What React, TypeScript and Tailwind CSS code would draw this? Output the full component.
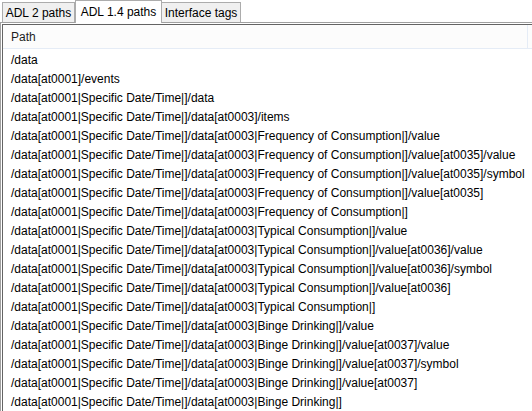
import React from "react";

const rows = [
  "/data",
  "/data[at0001]/events",
  "/data[at0001|Specific Date/Time|]/data",
  "/data[at0001|Specific Date/Time|]/data[at0003]/items",
  "/data[at0001|Specific Date/Time|]/data[at0003|Frequency of Consumption|]/value",
  "/data[at0001|Specific Date/Time|]/data[at0003|Frequency of Consumption|]/value[at0035]/value",
  "/data[at0001|Specific Date/Time|]/data[at0003|Frequency of Consumption|]/value[at0035]/symbol",
  "/data[at0001|Specific Date/Time|]/data[at0003|Frequency of Consumption|]/value[at0035]",
  "/data[at0001|Specific Date/Time|]/data[at0003|Frequency of Consumption|]",
  "/data[at0001|Specific Date/Time|]/data[at0003|Typical Consumption|]/value",
  "/data[at0001|Specific Date/Time|]/data[at0003|Typical Consumption|]/value[at0036]/value",
  "/data[at0001|Specific Date/Time|]/data[at0003|Typical Consumption|]/value[at0036]/symbol",
  "/data[at0001|Specific Date/Time|]/data[at0003|Typical Consumption|]/value[at0036]",
  "/data[at0001|Specific Date/Time|]/data[at0003|Typical Consumption|]",
  "/data[at0001|Specific Date/Time|]/data[at0003|Binge Drinking|]/value",
  "/data[at0001|Specific Date/Time|]/data[at0003|Binge Drinking|]/value[at0037]/value",
  "/data[at0001|Specific Date/Time|]/data[at0003|Binge Drinking|]/value[at0037]/symbol",
  "/data[at0001|Specific Date/Time|]/data[at0003|Binge Drinking|]/value[at0037]",
  "/data[at0001|Specific Date/Time|]/data[at0003|Binge Drinking|]",
];

export default function App() {
  return (
    <div
      className="w-[532px] h-[411px] overflow-hidden bg-white text-[12px] text-black flex flex-col"
      style={{ fontFamily: '"Liberation Sans", Arial, sans-serif' }}
    >
      {/* tab strip */}
      <div className="h-[22px] flex items-end pl-[2px] shrink-0">
        <div className="w-[73px] h-[20px] border border-b-0 border-[#acacac] bg-[#f0f0f0] flex items-center justify-center leading-none whitespace-nowrap">
          ADL 2 paths
        </div>
        <div className="w-[87px] h-[23px] -mb-[1px] relative z-10 border border-b-0 border-[#acacac] bg-white flex items-start justify-center pt-[5px] leading-none whitespace-nowrap">
          ADL 1.4 paths
        </div>
        <div className="w-[79px] h-[20px] border border-b-0 border-l-0 border-[#acacac] bg-[#f0f0f0] flex items-center justify-center leading-none whitespace-nowrap">
          Interface tags
        </div>
      </div>
      {/* tab page */}
      <div className="flex-1 border-t border-l border-[#a0a0a0] pt-[1px] pl-[1px] flex flex-col min-h-0">
        <div className="flex-1 border-t border-l border-[#646464] flex flex-col min-h-0">
          {/* header */}
          <div className="h-[24px] shrink-0 bg-[#fcfcfc] border-b border-[#e5ecf6] flex">
            <div className="w-[525px] flex items-center pl-[8px] text-[#1e1e1e] border-r border-[#e5ecf6]">
              Path
            </div>
          </div>
          {/* rows */}
          <div className="flex flex-col pt-[1px]">
            {rows.map((r, i) => (
              <div key={i} className="h-[19px] flex items-center pl-[8px] whitespace-nowrap">
                {r}
              </div>
            ))}
          </div>
        </div>
      </div>
    </div>
  );
}
